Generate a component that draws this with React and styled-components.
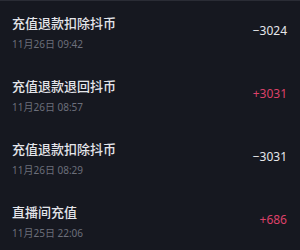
import React from "react";
import styled, { createGlobalStyle } from "styled-components";

const GlobalStyle = createGlobalStyle`
  html, body {
    margin: 0;
    padding: 0;
    background: #161820;
  }
  body {
    font-family: "Noto Sans", "Noto Sans CJK SC", sans-serif;
  }
`;

const List = styled.div`
  width: 300px;
  height: 250px;
  overflow: hidden;
  background: #161820;
  border-top: 1px solid #2a2c35;
  box-sizing: border-box;
`;

const Row = styled.div`
  display: flex;
  align-items: center;
  justify-content: space-between;
  height: 63px;
  padding: 0 13px 0 12px;
  box-sizing: border-box;
`;

const Info = styled.div`
  display: flex;
  flex-direction: column;
  gap: 5px;
  margin-top: -1px;
`;

const Title = styled.div`
  font-size: 13px;
  line-height: 18px;
  font-weight: 500;
  color: #e4e5ea;
`;

const Time = styled.div`
  font-size: 10px;
  line-height: 14px;
  color: #6c6f7b;
`;

const Amount = styled.div`
  font-size: 12px;
  line-height: 16px;
  margin-top: -3px;
  color: ${props => (props.positive ? "#dc4169" : "#e6e7eb")};
`;

const records = [
  { title: "充值退款扣除抖币", time: "11月26日 09:42", amount: -3024 },
  { title: "充值退款退回抖币", time: "11月26日 08:57", amount: 3031 },
  { title: "充值退款扣除抖币", time: "11月26日 08:29", amount: -3031 },
  { title: "直播间充值", time: "11月25日 22:06", amount: 686 }
];

export default () => {
  return (
    <>
      <GlobalStyle />
      <List>
        {records.map((record, i) => (
          <Row key={i}>
            <Info>
              <Title>{record.title}</Title>
              <Time>{record.time}</Time>
            </Info>
            <Amount positive={record.amount > 0}>
              {record.amount > 0 ? "+" + record.amount : "−" + Math.abs(record.amount)}
            </Amount>
          </Row>
        ))}
      </List>
    </>
  );
};
